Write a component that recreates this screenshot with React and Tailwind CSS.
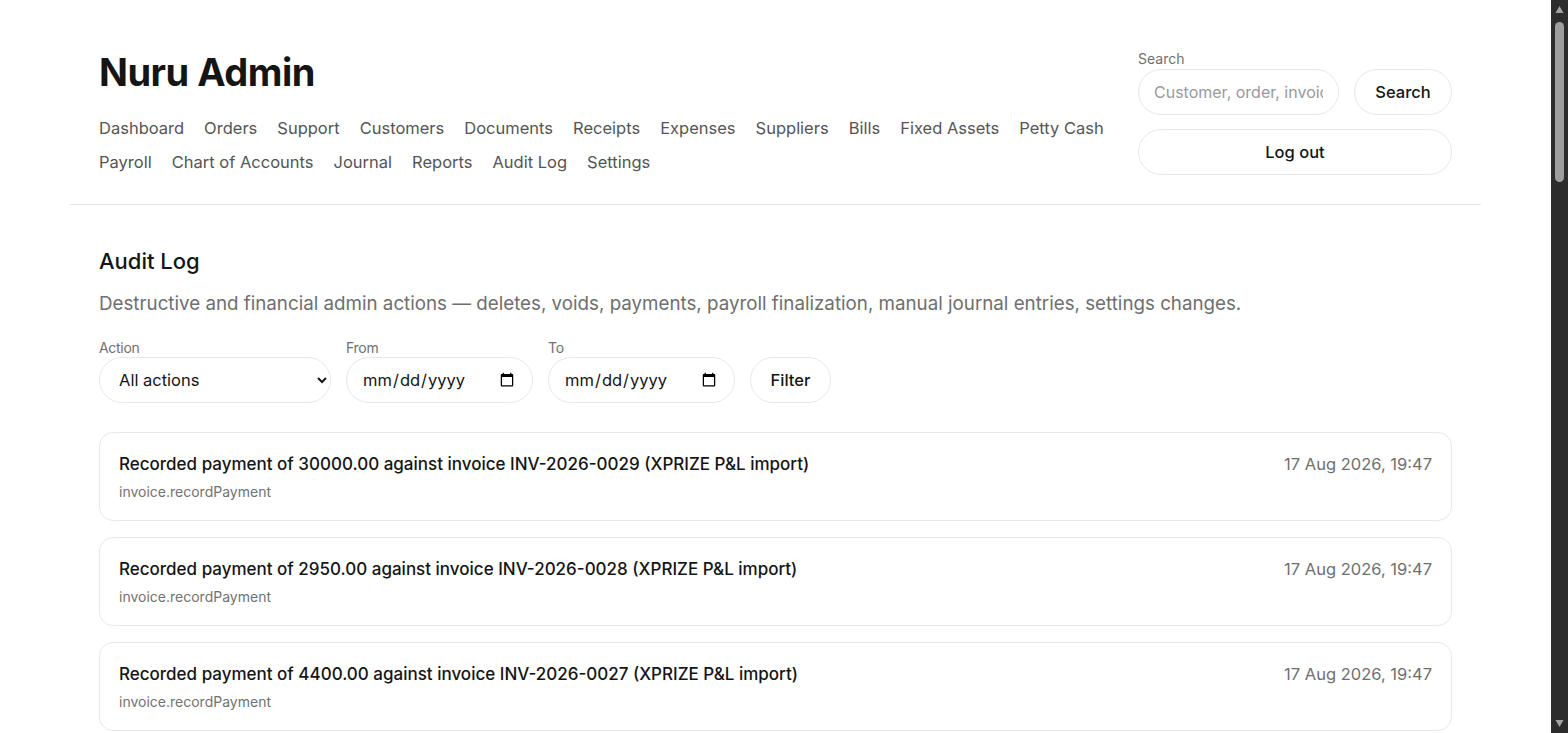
const navLinks = [
    "Dashboard", "Orders", "Support", "Customers", "Documents", "Receipts", "Expenses",
    "Suppliers", "Bills", "Fixed Assets", "Petty Cash", "Payroll", "Chart of Accounts",
    "Journal", "Reports", "Audit Log", "Settings"
];

const entries = [
    {amount: "30000.00", invoice: "INV-2026-0029"},
    {amount: "2950.00", invoice: "INV-2026-0028"},
    {amount: "4400.00", invoice: "INV-2026-0027"},
    {amount: "1250.00", invoice: "INV-2026-0026"},
    {amount: "8700.00", invoice: "INV-2026-0025"},
];

function Header() {
    return (
        <header className="flex justify-between px-[29px] pt-[48px] pb-[25px] border-b border-[#e6e6e6]">
            <div className="flex-1 pr-6">
                <h1 className="text-[38px] leading-[48px] font-bold tracking-[-0.5px] text-[#151515]">Nuru Admin</h1>
                <nav className="mt-[15px] flex flex-wrap gap-x-[20px] max-w-[1020px]">
                    {navLinks.map((l) => (
                        <a key={l} href="#" className="text-[16.5px] leading-[34px] text-[#555]">{l}</a>
                    ))}
                </nav>
            </div>
            <div className="w-[314px] pt-[2px]">
                <label className="block text-[14px] leading-[18px] text-[#6f6f6f]">Search</label>
                <div className="mt-[1px] flex gap-[15px]">
                    <input
                        placeholder="Customer, order, invoice"
                        className="w-[201px] h-[46px] rounded-full border border-[#e8e8e8] px-[15px] text-[16px] placeholder:text-[#9a9a9a] outline-none"/>
                    <button className="flex-1 h-[46px] rounded-full border border-[#e8e8e8] text-[16.5px] font-medium text-[#151515]">Search</button>
                </div>
                <button className="mt-[14px] w-full h-[46px] rounded-full border border-[#e8e8e8] text-[16.5px] font-medium text-[#151515]">Log out</button>
            </div>
        </header>
    )
}

function Filters() {
    return (
        <form className="mt-[22px] flex items-end gap-[15px]">
            <div>
                <label className="block text-[14px] leading-[18px] text-[#6f6f6f] tracking-[-0.3px]">Action</label>
                <select className="w-[232px] h-[46px] rounded-full border border-[#e8e8e8] pl-[15px] pr-[10px] text-[16.5px] text-[#151515] bg-white">
                    <option>All actions</option>
                </select>
            </div>
            <div>
                <label className="block text-[14px] leading-[18px] text-[#6f6f6f] tracking-[-0.3px]">From</label>
                <input type="date" className="w-[187px] h-[46px] rounded-full border border-[#e8e8e8] px-[15px] text-[16.5px] text-[#151515]"/>
            </div>
            <div>
                <label className="block text-[14px] leading-[18px] text-[#6f6f6f] tracking-[-0.3px]">To</label>
                <input type="date" className="w-[187px] h-[46px] rounded-full border border-[#e8e8e8] px-[15px] text-[16.5px] text-[#151515]"/>
            </div>
            <button type="button" className="w-[81px] h-[46px] rounded-full border border-[#e8e8e8] text-[16.5px] font-medium text-[#151515]">Filter</button>
        </form>
    )
}

function Entry({amount, invoice}) {
    return (
        <div className="flex justify-between rounded-[14px] border border-[#e8e8e8] px-[19px] pt-[19px] pb-[18px]">
            <div>
                <p className="text-[17px] leading-[24px] font-medium text-[#151515]">
                    Recorded payment of {amount} against invoice {invoice} (XPRIZE P&amp;L import)
                </p>
                <p className="mt-[6px] text-[14px] leading-[20px] text-[#727272]">invoice.recordPayment</p>
            </div>
            <span className="text-[16.5px] leading-[24px] text-[#6f6f6f]">17 Aug 2026, 19:47</span>
        </div>
    )
}

function Scrollbar() {
    return (
        <div className="w-[17px] h-screen shrink-0 bg-[#2c2c2c] flex flex-col items-center">
            <svg width="9" height="9" viewBox="0 0 9 9" className="mt-[5px]">
                <path d="M4.5 1 L8.5 8 L0.5 8 Z" fill="#a3a3a3"/>
            </svg>
            <div className="mt-[8px] w-[9px] h-[160px] rounded-full bg-[#9e9e9e]"/>
            <div className="flex-1"/>
            <svg width="9" height="9" viewBox="0 0 9 9" className="mb-[5px]">
                <path d="M0.5 1 L8.5 1 L4.5 8 Z" fill="#a3a3a3"/>
            </svg>
        </div>
    )
}

export default function App() {
    return (
        <div className="flex h-screen overflow-hidden bg-white" style={{fontFamily: "Inter, 'Noto Sans', sans-serif"}}>
            <div className="flex-1 min-w-0 overflow-hidden">
                <div className="max-w-[1411px] mx-auto">
                    <Header/>
                    <main className="px-[29px] pt-[42px] pb-16">
                        <h2 className="text-[22px] leading-[28px] font-medium text-[#151515]">Audit Log</h2>
                        <p className="mt-[16px] text-[18.75px] leading-[26px] text-[#6f6f6f]">
                            Destructive and financial admin actions — deletes, voids, payments, payroll finalization, manual journal entries, settings changes.
                        </p>
                        <Filters/>
                        <div className="mt-[29px] flex flex-col gap-[16px]">
                            {entries.map((e) => <Entry key={e.invoice} {...e}/>)}
                        </div>
                    </main>
                </div>
            </div>
            <Scrollbar/>
        </div>
    )
}
